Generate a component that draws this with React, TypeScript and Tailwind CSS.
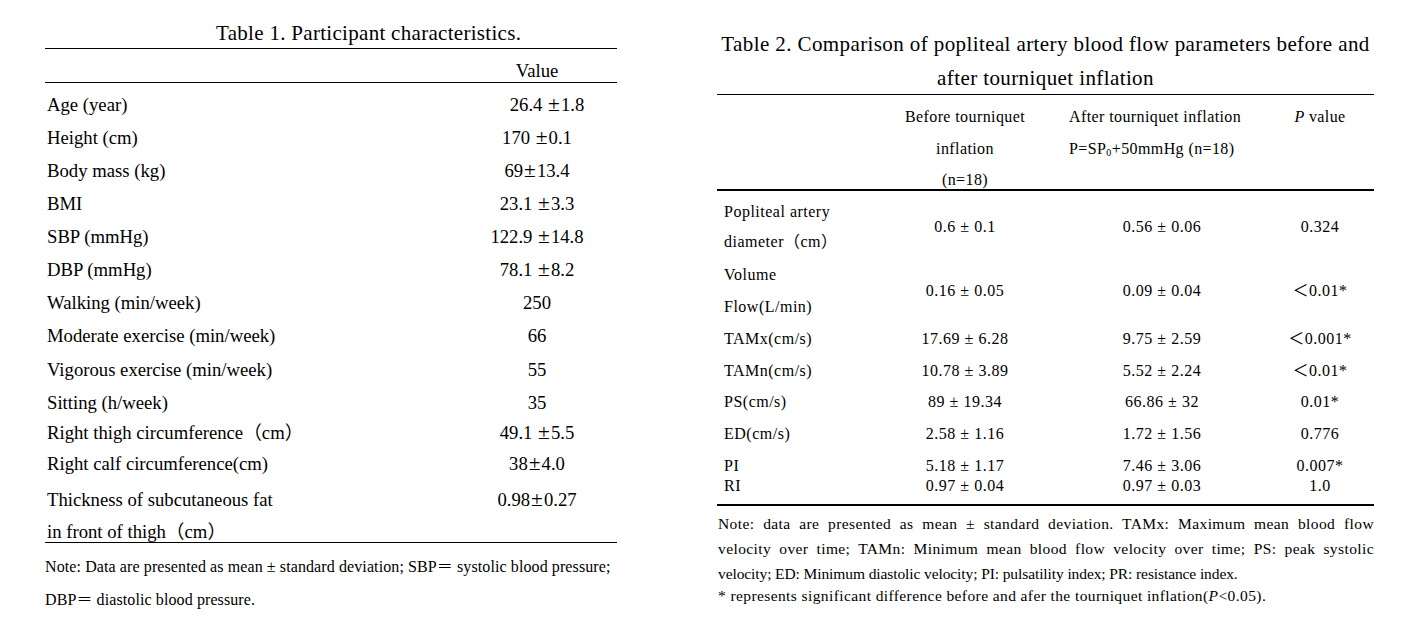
import React from "react";

type Row1 = { label: string[]; value: [string, string] | string; h: number; lh: number; vcls?: string; sp?: boolean };

function PM({ sp }: { sp?: boolean }) {
  return (
    <>
      {sp ? " " : ""}
      <span className="text-[1.15em] leading-none mx-[1px]">±</span>
    </>
  );
}

const rows1: Row1[] = [
  { label: ["Age (year)"], value: ["26.4", "1.8"], sp: true, h: 33, lh: 33, vcls: "pl-[20px]" },
  { label: ["Height (cm)"], value: ["170", "0.1"], sp: true, h: 33, lh: 33 },
  { label: ["Body mass (kg)"], value: ["69", "13.4"], h: 33, lh: 33 },
  { label: ["BMI"], value: ["23.1", "3.3"], sp: true, h: 33, lh: 33 },
  { label: ["SBP (mmHg)"], value: ["122.9", "14.8"], sp: true, h: 33, lh: 33 },
  { label: ["DBP (mmHg)"], value: ["78.1", "8.2"], sp: true, h: 33, lh: 33 },
  { label: ["Walking (min/week)"], value: "250", h: 33, lh: 33 },
  { label: ["Moderate exercise (min/week)"], value: "66", h: 34, lh: 34 },
  { label: ["Vigorous exercise (min/week)"], value: "55", h: 34, lh: 34 },
  { label: ["Sitting (h/week)"], value: "35", h: 31, lh: 31 },
  { label: ["Right thigh circumference（cm）"], value: ["49.1", "5.5"], sp: true, h: 30, lh: 30 },
  { label: ["Right calf circumference(cm)"], value: ["38", "4.0"], h: 32, lh: 32 },
];

function Rule() {
  return <div className="h-[1.5px] bg-black" />;
}

function Value({ v, sp }: { v: [string, string] | string; sp?: boolean }) {
  if (typeof v === "string") return <>{v}</>;
  return (
    <>
      {v[0]}
      <PM sp={sp} />
      {v[1]}
    </>
  );
}

function Table1() {
  return (
    <div className="ml-[45px] w-[572px] shrink-0">
      <div className="h-[47.5px] pt-[21px] pl-[171px] text-[21px] leading-[24px] tracking-[0.3px] whitespace-nowrap">
        Table 1. Participant characteristics.
      </div>
      <Rule />
      <div className="h-[32.5px] pt-[12px] grid grid-cols-[412px_160px] text-[18.7px] leading-[20px]">
        <div />
        <div className="text-center">Value</div>
      </div>
      <Rule />
      <div className="pt-[4.5px] text-[18.7px]">
        {rows1.map((r, i) => (
          <div
            key={i}
            className="grid grid-cols-[412px_160px]"
            style={{ height: r.h, lineHeight: `${r.lh}px` }}
          >
            <div className="pl-[2px] whitespace-nowrap">{r.label[0]}</div>
            <div className={`text-center whitespace-nowrap ${r.vcls ?? ""}`}>
              <Value v={r.value} sp={r.sp} />
            </div>
          </div>
        ))}
        <div className="grid grid-cols-[412px_160px] h-[62px] pt-[4px] leading-[32px]">
          <div className="pl-[2px] whitespace-nowrap">
            <div>Thickness of subcutaneous fat</div>
            <div>in front of thigh（cm）</div>
          </div>
          <div className="text-center whitespace-nowrap">
            <Value v={["0.98", "0.27"]} />
          </div>
        </div>
      </div>
      <Rule />
      <div className="pt-[6.5px] text-[16px] leading-[33px] tracking-[0.1px] whitespace-nowrap">
        <div>Note: Data are presented as mean ± standard deviation; SBP＝ systolic blood pressure;</div>
        <div>DBP＝ diastolic blood pressure.</div>
      </div>
    </div>
  );
}

type Row2 = { label: string[]; before: string; after: string; p: string; h: number; lh: number; mt?: number };

const rows2: Row2[] = [
  { label: ["Popliteal artery", "diameter（cm）"], before: "0.6 ± 0.1", after: "0.56 ± 0.06", p: "0.324", h: 60, lh: 30 },
  { label: ["Volume", "Flow(L/min)"], before: "0.16 ± 0.05", after: "0.09 ± 0.04", p: "＜0.01*", h: 64, lh: 32, mt: 2 },
  { label: ["TAMx(cm/s)"], before: "17.69 ± 6.28", after: "9.75 ± 2.59", p: "＜0.001*", h: 32, lh: 32 },
  { label: ["TAMn(cm/s)"], before: "10.78 ± 3.89", after: "5.52 ± 2.24", p: "＜0.01*", h: 31, lh: 31 },
  { label: ["PS(cm/s)"], before: "89 ± 19.34", after: "66.86 ± 32", p: "0.01*", h: 32, lh: 32 },
  { label: ["ED(cm/s)"], before: "2.58 ± 1.16", after: "1.72 ± 1.56", p: "0.776", h: 32, lh: 32 },
  { label: ["PI"], before: "5.18 ± 1.17", after: "7.46 ± 3.06", p: "0.007*", h: 20, lh: 20, mt: 4 },
  { label: ["RI"], before: "0.97 ± 0.04", after: "0.97 ± 0.03", p: "1.0", h: 20, lh: 20 },
];

function Table2() {
  return (
    <div className="ml-[100px] w-[657px] shrink-0">
      <div className="h-[93.5px] pt-[27px] text-center text-[21px] leading-[34px] tracking-[0.4px] whitespace-nowrap">
        <div>Table 2. Comparison of popliteal artery blood flow parameters before and</div>
        <div>after tourniquet inflation</div>
      </div>
      <Rule />
      <div className="h-[94.25px] pt-[6.25px] grid grid-cols-[163px_170px_224px_92px_8px] text-[16px] leading-[31.5px] tracking-[0.4px] whitespace-nowrap">
        <div />
        <div className="text-center">
          <div>Before tourniquet</div>
          <div>inflation</div>
          <div>(n=18)</div>
        </div>
        <div className="pl-[19px]">
          <div>After tourniquet inflation</div>
          <div>
            P=SP<sub className="text-[10px]">0</sub>+50mmHg (n=18)
          </div>
        </div>
        <div className="text-center">
          <span className="italic">P</span> value
        </div>
        <div />
      </div>
      <Rule />
      <div className="pt-[6.25px] pb-[10.25px] text-[16px] tracking-[0.5px] whitespace-nowrap">
        {rows2.map((r, i) => (
          <div
            key={i}
            className="grid grid-cols-[163px_170px_224px_92px_8px] items-center"
            style={{ height: r.h, marginTop: r.mt ?? 0 }}
          >
            <div className="pl-[7px]" style={{ lineHeight: `${r.lh}px` }}>
              {r.label.map((l, j) => (
                <div key={j}>{l}</div>
              ))}
            </div>
            <div className="text-center">{r.before}</div>
            <div className="text-center">{r.after}</div>
            <div className="text-center">{r.p}</div>
            <div />
          </div>
        ))}
      </div>
      <Rule />
      <div className="pt-[5px] pl-[1px] text-[15.5px] leading-[25px] tracking-[0.4px]">
        <div className="text-justify [text-align-last:justify] whitespace-nowrap">
          Note: data are presented as mean ± standard deviation. TAMx: Maximum mean blood flow
        </div>
        <div className="text-justify [text-align-last:justify] whitespace-nowrap">
          velocity over time; TAMn: Minimum mean blood flow velocity over time; PS: peak systolic
        </div>
        <div className="whitespace-nowrap tracking-[-0.1px]">
          velocity; ED: Minimum diastolic velocity; PI: pulsatility index; PR: resistance index.
        </div>
        <div className="-mt-[3px] whitespace-nowrap">
          * represents significant difference before and afer the tourniquet inflation(<span className="italic">P</span>&lt;0.05).
        </div>
      </div>
    </div>
  );
}

export default function App() {
  return (
    <div className="w-[1418px] h-[644px] overflow-hidden bg-white text-black font-['Liberation_Serif','Noto_Sans_CJK_SC',serif] flex">
      <Table1 />
      <Table2 />
    </div>
  );
}
